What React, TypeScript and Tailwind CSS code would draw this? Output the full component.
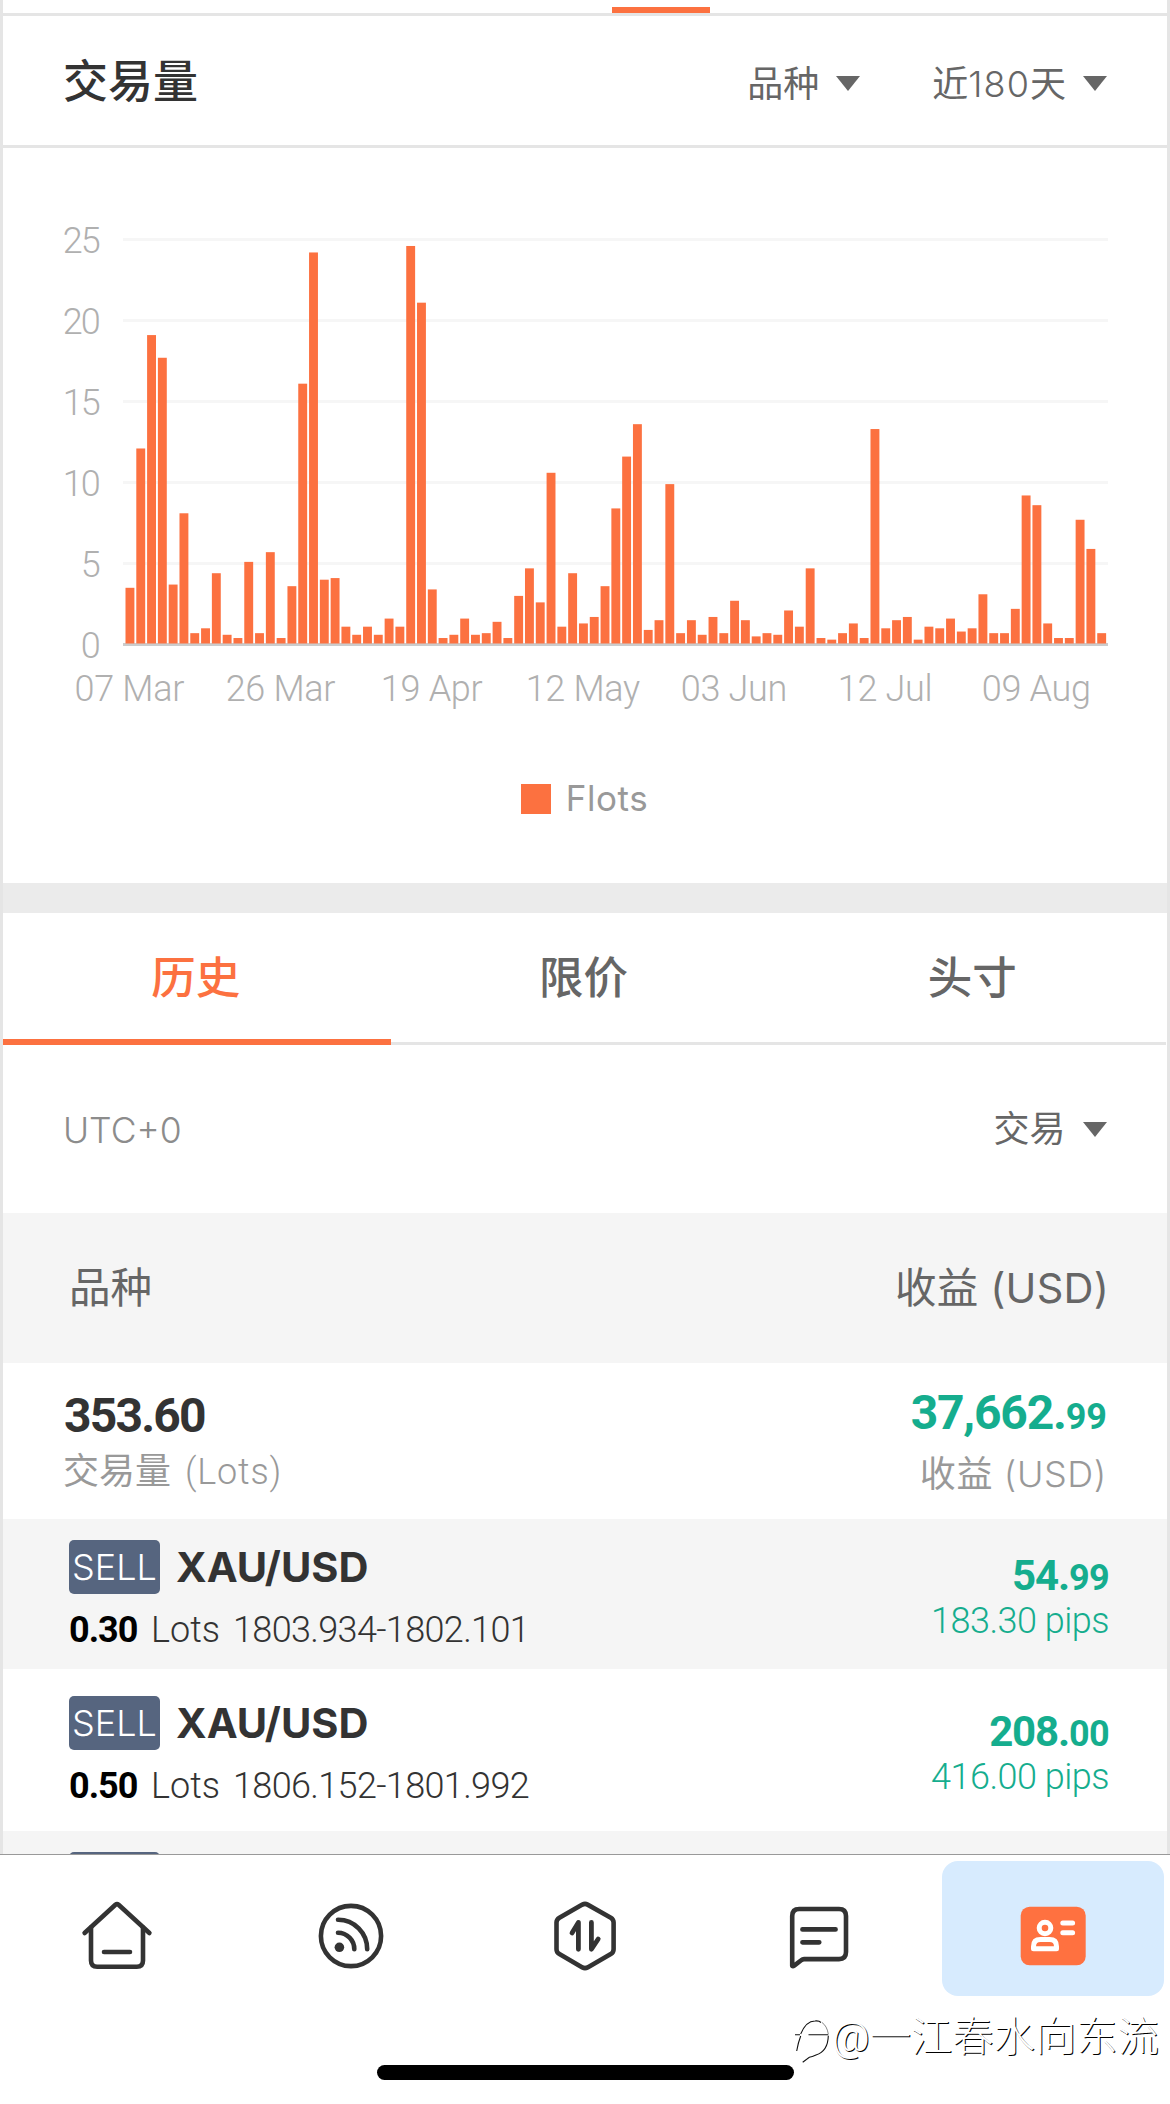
import React from 'react'

const BARS = [
  3.5, 12.1, 19.1, 17.7, 3.7, 8.1, 0.7, 1.0, 4.4, 0.6, 0.4, 5.1, 0.7, 5.7, 0.4, 3.6, 16.1, 24.2, 4.0, 4.1, 1.1, 0.6, 1.1,
  0.6, 1.6, 1.1, 24.6, 21.1, 3.4, 0.4, 0.6, 1.6, 0.6, 0.7, 1.4, 0.4, 3.0, 4.7, 2.6, 10.6, 1.1, 4.4, 1.3, 1.7, 3.6, 8.4,
  11.6, 13.6, 0.9, 1.5, 9.9, 0.7, 1.5, 0.6, 1.7, 0.7, 2.7, 1.5, 0.5, 0.7, 0.6, 2.1, 1.1, 4.7, 0.4, 0.3, 0.7, 1.3, 0.4,
  13.3, 1.0, 1.5, 1.7, 0.3, 1.1, 1.0, 1.6, 0.8, 1.0, 3.1, 0.7, 0.7, 2.2, 9.2, 8.6, 1.3, 0.4, 0.4, 7.7, 5.9, 0.7,
]
const DATES = ['07 Mar', '26 Mar', '19 Apr', '12 May', '03 Jun', '12 Jul', '09 Aug']
const PITCH = 10.797

function Caret() {
  return (
    <svg width="24" height="15" viewBox="0 0 24 15" className="block shrink-0">
      <path d="M0 0H24L12 15Z" fill="#666" />
    </svg>
  )
}

function Chart() {
  const ticks = [0, 5, 10, 15, 20, 25]
  const y = (v: number) => 434.5 - v * 16.2
  return (
    <svg width="1164" height="540" viewBox="3 0 1164 540" className="block font-['Roboto',sans-serif]">
      {ticks.map((t) => (
        <g key={t}>
          <rect x="123" y={y(t) - 1.5} width="985" height="3" fill={t === 0 ? '#cccccc' : '#f6f6f6'} />
          <text x="99" y={y(t) + 13.3} textAnchor="end" fontSize="36" fontWeight="300" fill="#b0b0b0" letterSpacing="-1.8">
            {t}
          </text>
        </g>
      ))}
      {BARS.map((v, i) => (
        <rect key={i} x={125.5 + i * PITCH} y={y(v)} width="8.9" height={v * 16.2 - 1} fill="#fc7140" />
      ))}
      {DATES.map((d, i) => (
        <text key={d} x={129.3 + i * 14 * PITCH} y="490.6" textAnchor="middle" fontSize="36" fontWeight="300" fill="#b0b0b0" letterSpacing="-0.3">
          {d}
        </text>
      ))}
    </svg>
  )
}

type Trade = { lots: string; prices: string; whole: string; cents: string; pips: string; box: string }
const TRADES: Trade[] = [
  { lots: '0.30', prices: '1803.934-1802.101', whole: '54', cents: '99', pips: '183.30 pips', box: 'h-[150px] pt-[21px] bg-[#f5f5f5]' },
  { lots: '0.50', prices: '1806.152-1801.992', whole: '208', cents: '00', pips: '416.00 pips', box: 'h-[162px] pt-[27px] bg-white' },
]

function Row({ t }: { t: Trade }) {
  return (
    <div className={`flex justify-between pl-[66px] pr-[58px] ${t.box}`}>
      <div>
        <div className="flex items-center">
          <span className="flex h-[54px] w-[91px] items-center justify-center rounded-[5px] bg-[#56657f] font-['Inter',sans-serif] text-[36px] font-light text-white">
            SELL
          </span>
          <span className="ml-[16px] pt-[1px] font-['Inter',sans-serif] text-[41.5px] leading-[53px] font-bold text-[#333]">XAU/USD</span>
        </div>
        <div className="mt-[12.5px] flex text-[36px] leading-[46px]">
          <b className="w-[82px] tracking-[-1px] text-black">{t.lots}</b>
          <span className="w-[82px] font-light text-[#333]">Lots</span>
          <span className="font-light tracking-[-0.65px] text-[#333]">{t.prices}</span>
        </div>
      </div>
      <div className="pt-[12px] text-right text-[#15ad8e]">
        <div className="text-[42px] leading-[48px] font-bold tracking-[-1.2px]">
          {t.whole}.<span className="text-[36px] tracking-[-0.6px]">{t.cents}</span>
        </div>
        <div className="-mt-[2px] text-[36px] leading-[42px] font-light tracking-[-0.5px]">{t.pips}</div>
      </div>
    </div>
  )
}

function NavIcon({ children }: { children: React.ReactNode }) {
  return (
    <svg width="72" height="72" viewBox="0 0 72 72" fill="none" stroke="#333" strokeWidth="4.6" strokeLinecap="round" strokeLinejoin="round">
      {children}
    </svg>
  )
}

export default function App() {
  return (
    <div className="relative flex h-[2104px] w-[1170px] flex-col overflow-hidden bg-white font-['Roboto','Noto_Sans_CJK_SC',sans-serif]">
      <div className="h-[1854px] shrink-0 overflow-hidden border-x-[3px] border-[#e5e5e5]">
        <div className="h-[16px] border-b-[3px] border-[#e5e5e5] pt-[7px]">
          <div className="ml-[609px] h-[6px] w-[98px] bg-[#fc7140]" />
        </div>
        <header className="flex h-[132px] items-center justify-between border-b-[3px] border-[#e5e5e5] pt-[4px] pr-[60px] pl-[60px]">
          <h1 className="text-[45px] leading-[60px] font-medium text-[#333]">交易量</h1>
          <div className="flex items-center pt-[2px] font-['Inter','Noto_Sans_CJK_SC',sans-serif] text-[36px] leading-[50px] text-[#666]">
            <span>品种</span>
            <span className="ml-[17px] pb-[1px]">
              <Caret />
            </span>
            <span className="ml-[72px]">
              近<span className="font-light tracking-[1.1px]">180</span>天
            </span>
            <span className="ml-[17px] pb-[1px]">
              <Caret />
            </span>
          </div>
        </header>
        <div className="h-[62px]" />
        <Chart />
        <div className="flex h-[133px] items-start justify-center pt-[34px] pr-[1px]">
          <span className="h-[30px] w-[30px] bg-[#fc7140]" />
          <span className="ml-[15px] font-['Inter',sans-serif] text-[35px] leading-[29px] tracking-[0.6px] text-[#999]">Flots</span>
        </div>
        <div className="h-[30px] bg-[#ebebeb]" />
        <nav className="grid h-[132px] grid-cols-3 pr-[1px] text-[44.5px] font-medium text-[#666]">
          <div className="flex items-center justify-center border-b-[6px] border-[#fc7140] pt-[7px] pr-[2px] text-[#fc7140]">历史</div>
          <div className="flex items-center justify-center border-b-[3px] border-[#e5e5e5] pt-[4px] pr-[2px]">限价</div>
          <div className="flex items-center justify-center border-b-[3px] border-[#e5e5e5] pt-[4px]">头寸</div>
        </nav>
        <div className="flex h-[168px] items-center justify-between pt-[1px] pr-[60px] pl-[60px]">
          <span className="pt-[2px] font-['Inter',sans-serif] text-[35.5px] font-light text-[#8c8c8c]">UTC+0</span>
          <span className="flex items-center gap-[17.5px] text-[36px] text-[#666]">
            交易 <Caret />
          </span>
        </div>
        <div className="flex h-[150px] items-center justify-between bg-[#f5f5f5] pt-[1px] pr-[58px] pl-[66px] font-['Inter','Noto_Sans_CJK_SC',sans-serif] text-[41.5px] text-[#666]">
          <span>品种</span>
          <span className="tracking-[0.2px]">收益 (USD)</span>
        </div>
        <div className="flex h-[156px] justify-between pr-[60px] pl-[60px] pt-[25px]">
          <div>
            <div className="pl-[1px] text-[48px] leading-[56px] font-bold tracking-[-1.8px] text-[#333]">353.60</div>
            <div className="text-[36px] leading-[56px] text-[#999]">
              交易量<span className="ml-[14px] font-light tracking-[0.8px]">(Lots)</span>
            </div>
          </div>
          <div className="text-right">
            <div className="text-[48px] leading-[50px] font-bold text-[#15ad8e]">
              <span className="tracking-[-1.2px]">37,662.</span>
              <span className="text-[36px]">99</span>
            </div>
            <div className="font-['Inter','Noto_Sans_CJK_SC',sans-serif] text-[36px] leading-[64px] tracking-[0.6px] text-[#999]">
              收益 <span className="font-light">(USD)</span>
            </div>
          </div>
        </div>
        {TRADES.map((t) => (
          <Row key={t.lots} t={t} />
        ))}
        <div className="h-[60px] bg-[#f5f5f5] pt-[21px] pl-[66px]">
          <div className="h-[54px] w-[91px] rounded-[5px] bg-[#56657f]" />
        </div>
      </div>

      <footer className="h-[250px] shrink-0 border-t border-[#999] bg-white">
        <div className="grid h-[164px] grid-cols-5 [&>div]:flex [&>div]:justify-center [&>div]:pt-[45px]">
          <div>
            <NavIcon>
              <path d="M3.6 33 34.4 4.8Q36 3.4 37.6 4.8L68.4 33" />
              <path d="M10 27.5V60.5Q10 66.7 16.2 66.7H55.8Q62 66.7 62 60.5V27.5M23 52H49" />
            </NavIcon>
          </div>
          <div>
            <NavIcon>
              <circle cx="36" cy="36" r="30.1" />
              <circle cx="24.4" cy="47.3" r="4.8" fill="#333" stroke="none" />
              <path d="M23 32.7A16.4 16.4 0 0 1 39.3 49.3M23 19.7A29 29.4 0 0 1 52.2 49.3" />
            </NavIcon>
          </div>
          <div>
            <NavIcon>
              <path d="M33.4 4.6Q36 3.2 38.6 4.6L61.8 17.7Q64.6 19.4 64.6 22.6V49.2Q64.6 52.4 61.8 54.1L38.6 67.4Q36 68.8 33.4 67.4L10.4 54.1Q7.5 52.4 7.5 49.2V22.6Q7.5 19.4 10.4 17.7Z" />
              <path d="M23 33 29.4 22.4V49.3M42.4 22.4V49.3L49.2 39" strokeWidth="4.8" />
            </NavIcon>
          </div>
          <div>
            <NavIcon>
              <path d="M9.2 65.8V16Q9.2 9 16.2 9H56Q63 9 63 16V52Q63 59.1 56 59.1H21Q19.5 59.1 18.2 60.2L11.2 65.6Q10 66.4 9.2 65.8Z" />
              <path d="M19.5 29.4H52.5M19.5 42.3H36.2" strokeWidth="4.8" />
            </NavIcon>
          </div>
          <div className="relative">
            <span className="absolute top-[6px] left-[6px] h-[135px] w-[222px] rounded-[16px] bg-[#d7ebfe]" />
            <span className="relative">
              <NavIcon>
                <rect x="3.7" y="6.7" width="65" height="58.6" rx="9" fill="#ff7140" stroke="none" />
                <g stroke="#fff" strokeWidth="5">
                  <circle cx="28" cy="28" r="5.8" />
                  <path d="M16.5 48.8V46.5Q16.5 39.6 23.4 39.6H32.6Q39.5 39.6 39.5 46.5V48.8Z" />
                  <path d="M45.8 23H55.6M45.8 32.7H55.6" />
                </g>
              </NavIcon>
            </span>
          </div>
        </div>
      </footer>

      <div className="absolute top-[2065px] left-[377px] h-[15px] w-[417px] rounded-full bg-black" />
      <div className="absolute top-[2007px] left-[794px] flex items-start">
        <svg width="36" height="60" viewBox="0 0 36 60" fill="none" stroke="#111" strokeWidth="1.1">
          <path d="M6.7 27C10 19 15 14 21 14Q25 13.5 27 15.5M1 27.7H6M14.5 27.7H34.3M6.7 29Q4 36 2.7 44M34.3 28.7Q34 44 22 48Q18 50 15.3 50.3L8.7 55.3" />
          <path d="M28 15.5Q33 19 34.3 27" strokeWidth="0.5" />
        </svg>
        <span className="ml-[2px] text-[41.3px] leading-[60px] font-light text-white [text-shadow:1px_1px_0_#000]">@一江春水向东流</span>
      </div>
    </div>
  )
}
